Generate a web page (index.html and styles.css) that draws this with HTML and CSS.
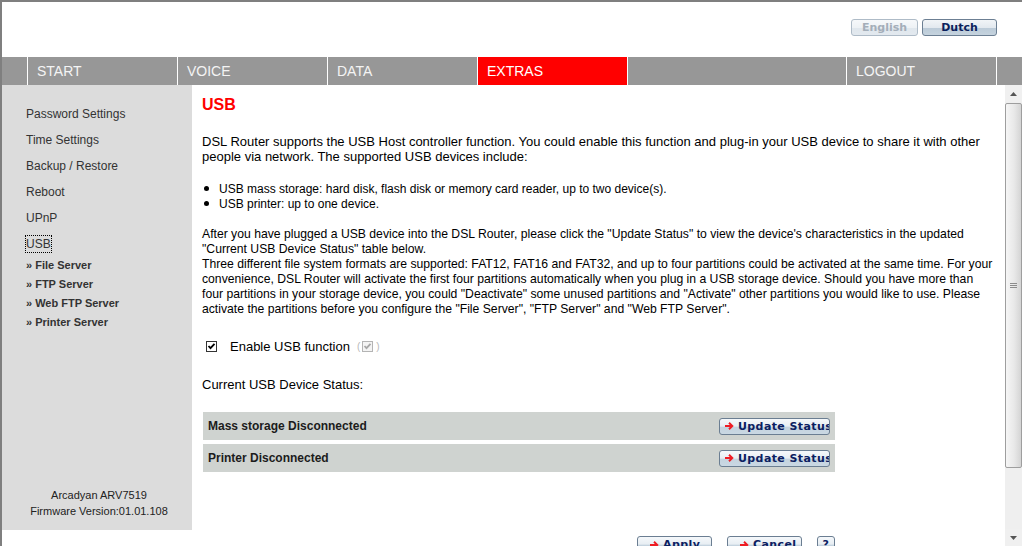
FILE: index.html
```html
<!DOCTYPE html>
<html lang="en">
<head>
<meta charset="utf-8">
<title>USB</title>
<link rel="stylesheet" href="styles.css">
</head>
<body>
<div class="page">
  <header class="top">
    <button class="lang lang-off">English</button>
    <button class="lang lang-on">Dutch</button>
  </header>
  <nav class="nav">
    <div class="cell c-pad"></div>
    <div class="cell c-tab">START</div>
    <div class="cell c-tab">VOICE</div>
    <div class="cell c-tab">DATA</div>
    <div class="cell c-tab active">EXTRAS</div>
    <div class="cell c-gap"></div>
    <div class="cell c-tab">LOGOUT</div>
    <div class="cell c-end"></div>
  </nav>
  <div class="body">
    <aside class="side">
      <ul class="menu">
        <li>Password Settings</li>
        <li>Time Settings</li>
        <li>Backup / Restore</li>
        <li>Reboot</li>
        <li>UPnP</li>
        <li><span class="focus">USB</span></li>
      </ul>
      <ul class="sub">
        <li>» File Server</li>
        <li>» FTP Server</li>
        <li>» Web FTP Server</li>
        <li>» Printer Server</li>
      </ul>
      <div class="ver">Arcadyan ARV7519<br>Firmware Version:01.01.108</div>
    </aside>
    <div class="frame">
      <main class="content">
        <h1 class="title">USB</h1>
        <p class="p1">DSL Router supports the USB Host controller function. You could enable this function and plug-in your USB device to share it with other<br>people via network. The supported USB devices include:</p>
        <ul class="bullets">
          <li>USB mass storage: hard disk, flash disk or memory card reader, up to two device(s).</li>
          <li>USB printer: up to one device.</li>
        </ul>
        <p class="p2">After you have plugged a USB device into the DSL Router, please click the "Update Status" to view the device's characteristics in the updated<br>"Current USB Device Status" table below.<br>Three different file system formats are supported: FAT12, FAT16 and FAT32, and up to four partitions could be activated at the same time. For your<br>convenience, DSL Router will activate the first four partitions automatically when you plug in a USB storage device. Should you have more than<br>four partitions in your storage device, you could "Deactivate" some unused partitions and "Activate" other partitions you would like to use. Please<br>activate the partitions before you configure the "File Server", "FTP Server" and "Web FTP Server".</p>
        <div class="enable">
          <svg class="chk" viewBox="0 0 11 11" width="11" height="11"><rect x="0.5" y="0.5" width="10" height="10" fill="#fff" stroke="#333"/><path d="M2.5 5 L4.5 7.2 L8.5 2.8" fill="none" stroke="#000" stroke-width="1.8"/></svg>
          <span class="enable-label">Enable USB function</span>
          <span class="mini">(<svg class="chk-mini" viewBox="0 0 11 11" width="11" height="11"><rect x="0.5" y="0.5" width="10" height="10" fill="#f4f4f4" stroke="#b4b4b4"/><path d="M2.5 5 L4.5 7.2 L8.5 2.8" fill="none" stroke="#a8a8a8" stroke-width="1.8"/></svg>)</span>
        </div>
        <div class="status-label">Current USB Device Status:</div>
        <div class="rows">
          <div class="row">
            <span>Mass storage Disconnected</span>
            <span class="btn btn-upd"><svg viewBox="0 0 9 8" width="9" height="8"><path d="M0 4 H7 M4 0.8 L7.3 4 L4 7.2" fill="none" stroke="#ee1c24" stroke-width="1.9"/></svg>Update Status</span>
          </div>
          <div class="row">
            <span>Printer Disconnected</span>
            <span class="btn btn-upd"><svg viewBox="0 0 9 8" width="9" height="8"><path d="M0 4 H7 M4 0.8 L7.3 4 L4 7.2" fill="none" stroke="#ee1c24" stroke-width="1.9"/></svg>Update Status</span>
          </div>
        </div>
        <div class="actions">
          <span class="btn btn-act"><svg viewBox="0 0 9 8" width="9" height="8"><path d="M0 4 H7 M4 0.8 L7.3 4 L4 7.2" fill="none" stroke="#ee1c24" stroke-width="1.9"/></svg>Apply</span>
          <span class="btn btn-act"><svg viewBox="0 0 9 8" width="9" height="8"><path d="M0 4 H7 M4 0.8 L7.3 4 L4 7.2" fill="none" stroke="#ee1c24" stroke-width="1.9"/></svg>Cancel</span>
          <span class="btn btn-help">?</span>
        </div>
      </main>
      <div class="scroll">
        <div class="sb-btn"><svg viewBox="0 0 7 4" width="7" height="4"><path d="M0 4 L3.5 0 L7 4 Z" fill="#555"/></svg></div>
        <div class="sb-thumb"><span class="grip"></span></div>
        <div class="sb-track"></div>
        <div class="sb-btn"><svg viewBox="0 0 7 4" width="7" height="4"><path d="M0 0 L3.5 4 L7 0 Z" fill="#555"/></svg></div>
      </div>
    </div>
  </div>
</div>
</body>
</html>
```

FILE: styles.css
```css
* { box-sizing: border-box; }
html, body { margin: 0; padding: 0; }
body {
  width: 1022px;
  height: 546px;
  overflow: hidden;
  background: #fff;
  font-family: "Liberation Sans", Arial, sans-serif;
}
.page {
  height: 546px;
  border-top: 2px solid #7f7f7f;
  border-left: 2px solid #7f7f7f;
  display: flex;
  flex-direction: column;
}

/* language buttons */
.top {
  height: 55px;
  flex: none;
  display: flex;
  justify-content: flex-end;
  align-items: flex-start;
  gap: 4px;
  padding: 17px 25px 0 0;
}
.lang {
  height: 17px;
  padding: 0;
  border-radius: 3px;
  font: bold 11px "DejaVu Sans", Verdana, sans-serif;
  line-height: 15px;
  text-align: center;
}
.lang-off {
  width: 67px;
  color: #a4aeb9;
  border: 1px solid #aebbc7;
  background: linear-gradient(#f6f8fa 0, #eef2f5 50%, #e0e7ed 56%, #e3e9ef 100%);
}
.lang-on {
  width: 75px;
  color: #0b1f5c;
  border: 1px solid #6c7f93;
  background: linear-gradient(#f1f4f7 0, #e3e9ef 50%, #bccbd8 56%, #c5d3de 100%);
}

/* nav */
.nav {
  height: 28px;
  flex: none;
  display: flex;
  background: #979797;
}
.cell {
  height: 28px;
  color: #f4f4f4;
  font-size: 14px;
  line-height: 28px;
  padding-left: 9px;
}
.cell + .cell { border-left: 1px solid #fff; }
.c-pad { width: 25px; padding: 0; }
.c-tab { width: 150px; }
.c-gap { width: 219px; }
.c-end { flex: 1; }
.active { background: #ff0000; color: #fff; }

/* body */
.body {
  flex: 1;
  min-height: 0;
  display: flex;
  align-items: flex-start;
}
.side {
  width: 190px;
  height: 445px;
  flex: none;
  background: #dcdcdc;
  display: flex;
  flex-direction: column;
  padding: 16px 0 11px 0;
  color: #333;
}
.menu, .sub {
  list-style: none;
  margin: 0;
  padding: 0 0 0 24px;
}
.menu li {
  font-size: 12px;
  line-height: 26px;
}
.focus {
  outline: 1px dotted #000;
  padding: 1px 0;
}
.sub { margin-top: -1px; }
.sub li {
  font-size: 11px;
  font-weight: bold;
  line-height: 19px;
}
.ver {
  margin-top: auto;
  padding-left: 4px;
  text-align: center;
  font-size: 11px;
  line-height: 16px;
  color: #222;
}

/* main frame */
.frame {
  flex: 1;
  height: 461px;
  display: flex;
  min-width: 0;
}
.content {
  flex: 1;
  min-width: 0;
  overflow: hidden;
  padding: 11px 0 0 10px;
  font-size: 13px;
  line-height: 15px;
  color: #000;
}
.title {
  margin: 0;
  font-size: 16px;
  line-height: 18px;
  font-weight: bold;
  color: #ff0000;
}
.content p { margin: 0; white-space: nowrap; }
.p1 { margin-top: 20px !important; }
.bullets {
  list-style: none;
  margin: 18px 0 0;
  padding: 0;
  white-space: nowrap;
  font-size: 12px;
}
.bullets li::before {
  content: "";
  display: inline-block;
  width: 5px;
  height: 5px;
  border-radius: 50%;
  background: #000;
  margin: 0 10px 0 2px;
  vertical-align: middle;
  position: relative;
  top: -1px;
}
.p2 { margin-top: 15px !important; font-size: 12.2px; }

.enable {
  margin-top: 22px;
  height: 15px;
  display: flex;
  align-items: center;
  padding-left: 4px;
}
.chk { flex: none; margin-right: 13px; }
.enable-label { font-size: 13px; }
.mini {
  display: inline-flex;
  align-items: center;
  margin-left: 7px;
  font-size: 10px;
  color: #b8b8b8;
}
.chk-mini { margin: 0 3px 0 2px; }

.status-label { margin-top: 23px; }

.rows {
  margin: 20px 0 0 1px;
  width: 632px;
  display: flex;
  flex-direction: column;
  gap: 4px;
}
.row {
  height: 28px;
  background: #cfd3d0;
  display: flex;
  align-items: center;
  justify-content: space-between;
  padding: 0 5px;
  font-size: 12px;
  font-weight: bold;
  color: #1c1c1c;
}

.btn {
  display: inline-flex;
  align-items: center;
  height: 17px;
  border: 1px solid #6b7e92;
  border-radius: 3px;
  background: linear-gradient(#f5f8fb 0, #e8eef3 48%, #c4d3df 54%, #cad8e3 100%);
  font: bold 11px "DejaVu Sans", Verdana, sans-serif;
  letter-spacing: 0.4px;
  color: #0b2061;
  overflow: hidden;
  white-space: nowrap;
}
.btn svg { flex: none; margin-right: 4px; }
.btn-upd { width: 111px; padding-left: 5px; }
.actions {
  margin: 64px 0 0 1px;
  width: 632px;
  display: flex;
  justify-content: flex-end;
  gap: 15px;
}
.btn-act { width: 75px; padding-left: 12px; }
.btn-help { width: 18px; justify-content: center; }

/* scrollbar */
.scroll {
  width: 17px;
  flex: none;
  height: 461px;
  display: flex;
  flex-direction: column;
  background: #efefef;
}
.sb-btn {
  height: 17px;
  flex: none;
  display: flex;
  align-items: center;
  justify-content: center;
  background: #f0f0f0;
}
.sb-thumb {
  height: 365px;
  flex: none;
  margin: 1px 0 0;
  border: 1px solid #9e9e9e;
  border-radius: 2px;
  background: linear-gradient(to right, #f6f6f6, #e8e8e8 55%, #d4d4d4);
  display: flex;
  align-items: center;
  justify-content: center;
}
.grip {
  width: 7px;
  height: 5px;
  border-top: 1px solid #8c8c8c;
  border-bottom: 1px solid #8c8c8c;
  background: linear-gradient(#fff0 0 40%, #8c8c8c 40% 60%, #fff0 60%);
}
.sb-track { flex: 1; }
```
